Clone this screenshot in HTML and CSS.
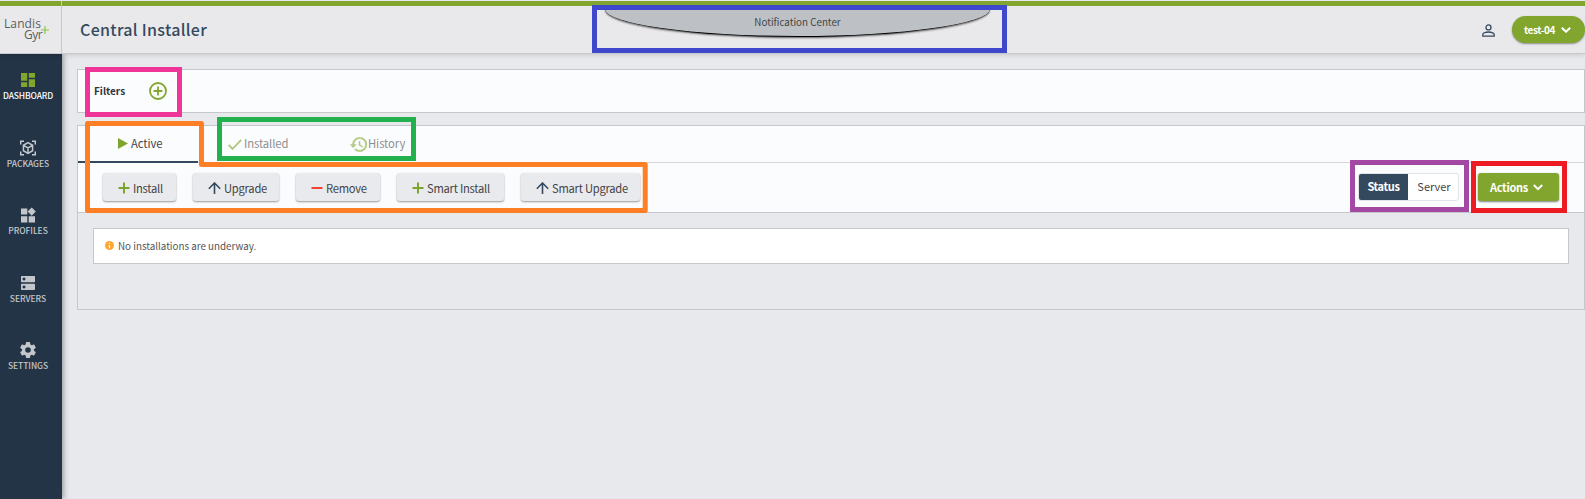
FILE: index.html
```html
<!DOCTYPE html>
<html lang="en">
<head>
<meta charset="utf-8">
<title>Central Installer</title>
<link rel="stylesheet" href="styles.css">
</head>
<body>
<div class="app">
  <header class="header">
    <div class="logo">
      <span class="logo-top">Landis</span>
      <span class="logo-bottom">Gyr</span>
      <svg class="logo-plus" width="8" height="8" viewBox="0 0 8 8"><path d="M4 0v8M0 4h8" stroke="#8cc63f" stroke-width="1.2"/></svg>
    </div>
    <h1 class="title">Central Installer</h1>
    <div class="notification"><span>Notification Center</span></div>
    <div class="account">
      <svg width="13" height="13" viewBox="0 0 13 13" fill="none" stroke="#34495e" stroke-width="1.3"><circle cx="6.5" cy="3.4" r="2.5"/><path d="M.8 12.2v-1.6C.8 8.800 4.200 8 6.500 8s5.700.8 5.700 2.600v1.600z"/></svg>
      <button class="user"><span>test-04</span><svg width="10" height="6" viewBox="0 0 10 6"><path d="M.8.8 5 4.700 9.200.8" fill="none" stroke="#fff" stroke-width="2"/></svg></button>
    </div>
  </header>
  <div class="body">
    <nav class="sidebar">
      <a class="nav active"><svg width="14" height="14" viewBox="3 3 18 18"><path fill="currentColor" d="M3 13h8V3H3zm0 8h8v-6H3zm10 0h8V11h-8zm0-18v6h8V3z"/></svg><span>DASHBOARD</span></a>
      <a class="nav"><svg width="16" height="15" viewBox="0 0 16 15" fill="none" stroke="currentColor" stroke-width="1.500"><path d="M.7 4V.7H4M12 .7h3.300V4M.7 11v3.300H4M12 14.300h3.300V11M8 2.200l4.600 2.600v5.400L8 12.800l-4.600-2.600V4.800zM3.400 4.800 8 7.500l4.600-2.700M8 7.500v5.300"/></svg><span>PACKAGES</span></a>
      <a class="nav"><svg width="15" height="15" viewBox="0 0 15 15"><path fill="currentColor" d="M0 1h6.300v6H0zM0 8.800h6.300V15H0zM7.700 8.800H14V15H7.700zM10.700 0l4.100 4.100-4.100 4.100-4.100-4.100z"/></svg><span>PROFILES</span></a>
      <a class="nav"><svg width="14" height="14" viewBox="0 0 14 14"><path fill="currentColor" fill-rule="evenodd" d="M.7 0h12.600q.7 0 .7.700v4.800q0 .7-.7.700H.7q-.7 0-.7-.7V.7Q0 0 .7 0zM3 1.600a1.500 1.500 0 1 0 .01 0zM.7 7.800h12.600q.7 0 .7.700v4.800q0 .7-.7.700H.7q-.7 0-.7-.7V8.500q0-.7.7-.7zM3 9.400a1.500 1.500 0 1 0 .01 0z"/></svg><span>SERVERS</span></a>
      <a class="nav"><svg width="16" height="16" viewBox="2 2 20 20"><path fill="currentColor" d="M19.430 12.980c.04-.32.070-.64.070-.98s-.03-.66-.07-.98l2.110-1.650c.19-.15.240-.42.120-.64l-2-3.460c-.12-.22-.39-.3-.61-.22l-2.490 1c-.52-.4-1.080-.73-1.690-.98l-.38-2.650C14.460 2.180 14.250 2 14 2h-4c-.25 0-.46.180-.49.420l-.38 2.650c-.61.250-1.170.590-1.690.98l-2.490-1c-.23-.09-.49 0-.61.220l-2 3.460c-.13.220-.07.490.12.640l2.110 1.650c-.04.320-.07.650-.07.980s.03.660.070.980l-2.110 1.650c-.19.150-.24.420-.12.640l2 3.460c.12.220.39.300.61.220l2.490-1c.52.400 1.080.730 1.690.98l.38 2.650c.03.240.240.420.49.420h4c.25 0 .46-.18.490-.42l.38-2.650c.61-.25 1.170-.59 1.690-.98l2.490 1c.23.090.49 0 .61-.22l2-3.460c.12-.22.070-.49-.12-.64zM12 15.500A3.500 3.500 0 1 1 12 8.500a3.500 3.500 0 0 1 0 7z"/></svg><span>SETTINGS</span></a>
    </nav>
    <main class="main">
      <section class="filters">
        <span class="filters-label">Filters</span>
        <svg width="18" height="18" viewBox="0 0 18 18" fill="none" stroke="#82a62d"><circle cx="9" cy="9" r="8" stroke-width="1.800"/><path d="M9 4.600v8.800M4.600 9h8.800" stroke-width="1.800"/></svg>
      </section>
      <section class="panel">
        <div class="tabs">
          <a class="tab selected"><svg width="10" height="11" viewBox="0 0 9 11" preserveAspectRatio="none"><path d="M0 0v11l9-5.500z" fill="#7fa42d"/></svg><span>Active</span></a>
          <a class="tab installed"><svg width="14" height="11" viewBox="0 0 14 11"><path d="M.7 6 4.500 9.800 13.200.8" fill="none" stroke="#82a62d" stroke-width="1.900"/></svg><span>Installed</span></a>
          <a class="tab history"><svg width="17" height="15" viewBox="1 3 21 18"><path fill="#82a62d" stroke="#82a62d" stroke-width=".4" d="M13 3a9 9 0 0 0-9 9H1l3.890 3.890.07.140L9 12H6c0-3.870 3.130-7 7-7s7 3.130 7 7-3.130 7-7 7c-1.930 0-3.680-.79-4.940-2.060l-1.420 1.420A8.950 8.950 0 0 0 13 21a9 9 0 0 0 0-18zm-1 5v5l4.280 2.540.72-1.210-3.500-2.080V8z"/></svg><span>History</span></a>
        </div>
        <div class="toolbar">
          <button class="tool w1"><svg width="12" height="12" viewBox="0 0 12 12"><path d="M6 .5v11M.5 6h11" stroke="#7fa42d" stroke-width="2"/></svg><span>Install</span></button>
          <button class="tool w2"><svg width="13" height="12" viewBox="0 0 13 12"><path d="M6.500 12V1M.8 6.700 6.500 1l5.700 5.700" fill="none" stroke="#34495e" stroke-width="1.600"/></svg><span>Upgrade</span></button>
          <button class="tool w3"><svg width="12" height="12" viewBox="0 0 12 12"><path d="M.5 6h11" stroke="#f44336" stroke-width="2"/></svg><span>Remove</span></button>
          <button class="tool w4"><svg width="12" height="12" viewBox="0 0 12 12"><path d="M6 .5v11M.5 6h11" stroke="#7fa42d" stroke-width="2"/></svg><span>Smart Install</span></button>
          <button class="tool w5"><svg width="13" height="12" viewBox="0 0 13 12"><path d="M6.500 12V1M.8 6.700 6.500 1l5.700 5.700" fill="none" stroke="#34495e" stroke-width="1.600"/></svg><span>Smart Upgrade</span></button>
          <div class="toggle"><span class="on">Status</span><span class="off">Server</span></div>
          <button class="actions"><span>Actions</span><svg width="10" height="7" viewBox="0 0 10 7"><path d="M.8 1 5 5.200 9.200 1" fill="none" stroke="#fff" stroke-width="1.900"/></svg></button>
        </div>
        <div class="content">
          <div class="message"><svg width="9" height="9" viewBox="0 0 9 9"><circle cx="4.500" cy="4.500" r="4.500" fill="#ffa733"/><path d="M4.500 1.700v1.200M4.500 3.900v3.300" stroke="#fff" stroke-width="1.100"/></svg><span>No installations are underway.</span></div>
        </div>
      </section>
    </main>
  </div>
  <div class="mark pink"></div>
  <div class="mark green"></div>
  <div class="mark blue"></div>
  <div class="mark purple"></div>
  <div class="mark red"></div>
  <svg class="mark-shape" width="563" height="92" viewBox="0 0 563 92"><path d="M2.500 2.500h114v41h443.700v46H2.500z" fill="none" stroke="#ff7f27" stroke-width="5" stroke-linejoin="round"/></svg>
</div>
</body>
</html>
```
FILE: styles.css
```css
* { box-sizing: border-box; }
body { margin: 0; background: #e8e9ed; font-family: "Noto Sans CJK SC", "Noto Sans", sans-serif; color: #444; }
button { font: inherit; border: 0; margin: 0; padding: 0; color: inherit; }
svg { display: block; flex: none; }
.app { position: relative; width: 1585px; height: 499px; overflow: hidden; display: flex; flex-direction: column; }
.header { height: 54px; flex: none; display: flex; border-top: 1px solid #e8e9ed; border-bottom: 1px solid #c8c9cd; box-shadow: 0 1px 5px rgba(0,0,0,.14); position: relative; z-index: 1; background: linear-gradient(#82a62d 5px, #e9e9ec 5px); }
.logo { width: 62px; border-right: 1px solid #c6c7cb; padding: 17px 0 0 4px; position: relative; font: 400 12px/12px "Open Sans", "Noto Sans", sans-serif; color: #5c5d5f; display: flex; flex-direction: column; }
.logo-top { letter-spacing: .1px; height: 11px; line-height: 11px; }
.logo-bottom { padding-left: 20px; letter-spacing: -.5px; height: 11px; line-height: 11px; }
.logo-plus { position: absolute; left: 41px; top: 25px; }
.title { margin: 0; padding: 5px 0 0 18px; width: 543px; font-size: 16px; font-weight: 500; line-height: 46px; letter-spacing: .3px; color: #34495e; }
.notification { width: 385px; height: 28px; margin-top: 8px; border-bottom: 1.500px solid #000; border-radius: 0 0 50% 50% / 0 0 100% 100%; background: #bdc1c6; box-shadow: 0 1px 2px rgba(0,0,0,.6); font-size: 9.800px; line-height: 27px; text-align: center; color: #444; }
.account { margin-left: auto; padding-top: 5px; display: flex; align-items: center; gap: 17px; }
.account > svg { margin-top: 2px; }
.user { width: 73px; height: 27px; margin-top: -1px; border-radius: 14px; background: #82a62d; color: #fff; font-size: 10px; letter-spacing: -.4px; font-weight: 700; display: flex; align-items: center; gap: 6px; padding-left: 12px; box-shadow: 0 1px 2px rgba(0,0,0,.4); }
.user svg { margin-top: 2px; }
.body { flex: 1; display: flex; }
.sidebar { width: 62px; background: #233446; box-shadow: 1px 0 6px rgba(0,0,0,.4); padding-top: 15px; }
.nav { height: 67.500px; width: 56px; display: flex; flex-direction: column; align-items: center; color: #c3c7cb; font-size: 8.500px; line-height: 12px; font-weight: 500; letter-spacing: -.05px; }
.nav svg { height: 22px; margin-bottom: -2px; }
.nav span { white-space: nowrap; }
.nav.active { color: #82a62d; }
.nav.active span { color: #fff; letter-spacing: -.15px; }
.main { flex: 1; padding: 15px 0 0 15px; }
.filters { height: 44px; border: 1px solid #c6c7cb; background: #fbfcfe; display: flex; align-items: center; padding: 0 0 1px 16px; }
.filters-label { width: 55px; font-size: 10px; font-weight: 700; color: #2e3338; padding-bottom: 1px; }
.panel { margin-top: 12px; height: 185px; border: 1px solid #c6c7cb; }
.tabs { height: 37px; background: #fbfcfe; border-bottom: 1px solid #d6d7da; display: flex; }
.tab { display: flex; align-items: center; font-size: 11.300px; letter-spacing: -.1px; }
.tab span { padding-bottom: 2px; }
.tab.selected { width: 120px; height: 37px; border-bottom: 2px solid #34495e; padding-left: 40px; gap: 3px; }
.tab.installed { width: 122px; padding-left: 30px; gap: 2px; opacity: .6; }
.tab.history { padding-left: 30px; gap: 1px; opacity: .6; }
.toolbar { height: 50px; background: #fbfcfe; border-bottom: 1px solid #c6c7cb; display: flex; padding: 10px 25px 0 25px; }
.tool { height: 28px; margin-right: 17px; border-radius: 3px; background: #e9eaee; box-shadow: 0 1px 2px rgba(0,0,0,.4); display: flex; align-items: center; padding: 2px 0 0 15px; gap: 3px; font-size: 11.200px; letter-spacing: -.25px; white-space: nowrap; }
.w1 { width: 73px; }
.w2 { width: 86px; }
.w3 { width: 84px; }
.w4 { width: 107px; }
.w5 { width: 119px; }
.toggle { margin-left: auto; width: 101px; height: 28px; border: 1px solid #e2e3e6; border-radius: 3px; background: #fff; display: flex; font-size: 11px; line-height: 25px; text-align: center; overflow: hidden; }
.on { width: 49px; background: #34495e; color: #fff; font-weight: 700; letter-spacing: -.35px; }
.off { flex: 1; padding-left: 2px; }
.actions { width: 81px; height: 28px; margin-left: 19px; border-radius: 3px; background: #82a62d; box-shadow: 0 1px 2px rgba(0,0,0,.5); color: #fff; font-size: 11px; letter-spacing: -.3px; font-weight: 700; display: flex; align-items: center; padding: 0 0 0 12px; gap: 5px; }
.content { padding: 15px; }
.message { height: 36px; border: 1px solid #c6c7cb; background: #fff; display: flex; align-items: center; gap: 4px; padding: 0 0 1px 11px; font-size: 9.800px; color: #555; }
.mark { position: absolute; z-index: 2; border: 5px solid; }
.pink { left: 85px; top: 67px; width: 97px; height: 50px; border-color: #f03599; }
.green { left: 217px; top: 117px; width: 199px; height: 44px; border-color: #22b14c; }
.blue { left: 592px; top: 5px; width: 415px; height: 48px; border-color: #3f48cc; }
.purple { left: 1350px; top: 160px; width: 119px; height: 52px; border-color: #a349a4; }
.red { left: 1471px; top: 161px; width: 96px; height: 52px; border-color: #ed1c24; }
.mark-shape { position: absolute; z-index: 2; left: 85px; top: 121px; }
```
